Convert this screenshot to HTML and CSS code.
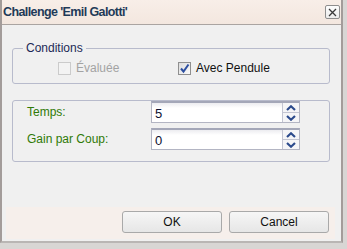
FILE: index.html
```html
<!DOCTYPE html>
<html lang="fr">
<head>
    <meta charset="UTF-8">
    <title>Challenge 'Emil Galotti'</title>
    <link rel="stylesheet" href="styles.css">
</head>
<body>
    <div class="window">
        <div class="titlebar">
            <span class="title">Challenge 'Emil Galotti'</span>
            <button class="close-btn">
                <svg width="9" height="9" viewBox="0 0 9 9"><path d="M1 1 L8 8 M8 1 L1 8" stroke="#3a3a3a" stroke-width="1.3" fill="none"/></svg>
            </button>
        </div>

        <div class="dialog-body">
            <fieldset class="group conditions">
                <legend>Conditions</legend>
                <div class="check-row">
                    <label class="check disabled"><span class="box"></span>Évaluée</label>
                    <label class="check"><span class="box checked">
                        <svg width="11" height="11" viewBox="0 0 11 11"><path d="M2 5.5 L4.5 8.5 L9.5 1.5" stroke="#2d4fa0" stroke-width="2" fill="none"/></svg>
                    </span>Avec Pendule</label>
                </div>
            </fieldset>

            <div class="group params">
                <div class="field-row">
                    <span class="field-label">Temps:</span>
                    <div class="spin">
                        <span class="spin-value">5</span>
                        <div class="spin-btns">
                            <span class="spin-btn"><svg width="10" height="6" viewBox="0 0 10 6"><path d="M1 5 L5 1.3 L9 5" stroke="#2b4a8c" stroke-width="2.2" fill="none"/></svg></span>
                            <span class="spin-btn"><svg width="10" height="6" viewBox="0 0 10 6"><path d="M1 1 L5 4.7 L9 1" stroke="#2b4a8c" stroke-width="2.2" fill="none"/></svg></span>
                        </div>
                    </div>
                </div>
                <div class="field-row">
                    <span class="field-label">Gain par Coup:</span>
                    <div class="spin">
                        <span class="spin-value">0</span>
                        <div class="spin-btns">
                            <span class="spin-btn"><svg width="10" height="6" viewBox="0 0 10 6"><path d="M1 5 L5 1.3 L9 5" stroke="#2b4a8c" stroke-width="2.2" fill="none"/></svg></span>
                            <span class="spin-btn"><svg width="10" height="6" viewBox="0 0 10 6"><path d="M1 1 L5 4.7 L9 1" stroke="#2b4a8c" stroke-width="2.2" fill="none"/></svg></span>
                        </div>
                    </div>
                </div>
            </div>

            <div class="footer">
                <button class="btn">OK</button>
                <button class="btn">Cancel</button>
            </div>
        </div>
    </div>
</body>
</html>
```

FILE: styles.css
```css
/* General */
* {
    margin: 0;
    padding: 0;
    box-sizing: border-box;
}

body {
    width: 347px;
    height: 249px;
    overflow: hidden;
    background: #d8d6d4;
    font-family: 'Liberation Sans', Arial, sans-serif;
    font-size: 12px;
}

/* Window */
.window {
    width: 343px;
    height: 243px;
    background: #f0f0f0;
    border-left: 2px solid #a39c9a;
    border-right: 2px solid #a39c9a;
    border-bottom: 2px solid #b9b6b4;
}

.titlebar {
    height: 25px;
    display: flex;
    align-items: center;
    justify-content: space-between;
    padding: 0 1px 0 1px;
    background: linear-gradient(#f8eee8, #f3e7df);
    border-bottom: 1px solid #aaa4a1;
}

.title {
    font-weight: bold;
    font-size: 12.5px;
    letter-spacing: -0.6px;
    color: #1f3a58;
}

.close-btn {
    width: 15px;
    height: 14px;
    display: flex;
    align-items: center;
    justify-content: center;
    background: linear-gradient(#fdfdfd, #ececec);
    border: 1px solid #8e8e8e;
    border-radius: 2px;
}

/* Body */
.dialog-body {
    padding: 16px 11px 0 10px;
}

.group {
    border: 1px solid #b8bbcc;
    border-radius: 3px;
}

.conditions {
    padding: 0 0 8px 0;
}

.conditions legend {
    margin-left: 10px;
    padding: 0 3px;
    line-height: 14px;
    color: #1c2956;
}

.check-row {
    display: flex;
    margin-top: 6px;
    padding-left: 45px;
    height: 14px;
    align-items: center;
}

.check {
    display: flex;
    align-items: center;
    gap: 5px;
    color: #111;
}

.check.disabled {
    width: 120px;
    color: #a3a3a3;
}

.box {
    width: 13px;
    height: 13px;
    display: flex;
    align-items: center;
    justify-content: center;
    border: 1px solid #8f8f8f;
    background: linear-gradient(135deg, #dcdcdc, #fbfbfb);
}

.check.disabled .box {
    border-color: #cbcbcb;
    background: #f3f3f3;
}

/* Parameters */
.params {
    margin-top: 16px;
    padding: 0 0 11px 14px;
    display: flex;
    flex-direction: column;
    gap: 5px;
}

.field-row {
    display: flex;
    align-items: center;
}

.field-label {
    width: 124px;
    color: #2f7a06;
}

.spin {
    width: 149px;
    height: 22px;
    display: flex;
    border: 1px solid #b3b5c3;
    border-top: 2px solid #a4a7b8;
    background: linear-gradient(#ececf0, #ffffff 5px);
}

.spin-value {
    flex: 1;
    padding: 3px 0 0 3px;
    font-size: 13px;
    color: #0c1030;
}

.spin-btns {
    width: 17px;
    display: flex;
    flex-direction: column;
    border-left: 1px solid #c3c5d2;
}

.spin-btn {
    flex: 1;
    display: flex;
    align-items: center;
    justify-content: center;
    background: #f5f5f7;
}

.spin-btn + .spin-btn {
    border-top: 1px solid #c3c5d2;
}

/* Footer */
.footer {
    margin: 45px -5px 0 -6px;
    height: 32px;
    padding: 4px 6px 0 0;
    display: flex;
    justify-content: flex-end;
    gap: 7px;
    background: #f6efeb;
}

.btn {
    width: 100px;
    height: 22px;
    font-family: 'Liberation Sans', Arial, sans-serif;
    font-size: 12px;
    color: #111;
    background: linear-gradient(#f6f6f6, #e6e6e6);
    border: 1px solid #a9a9a9;
    border-radius: 3px;
}
```
